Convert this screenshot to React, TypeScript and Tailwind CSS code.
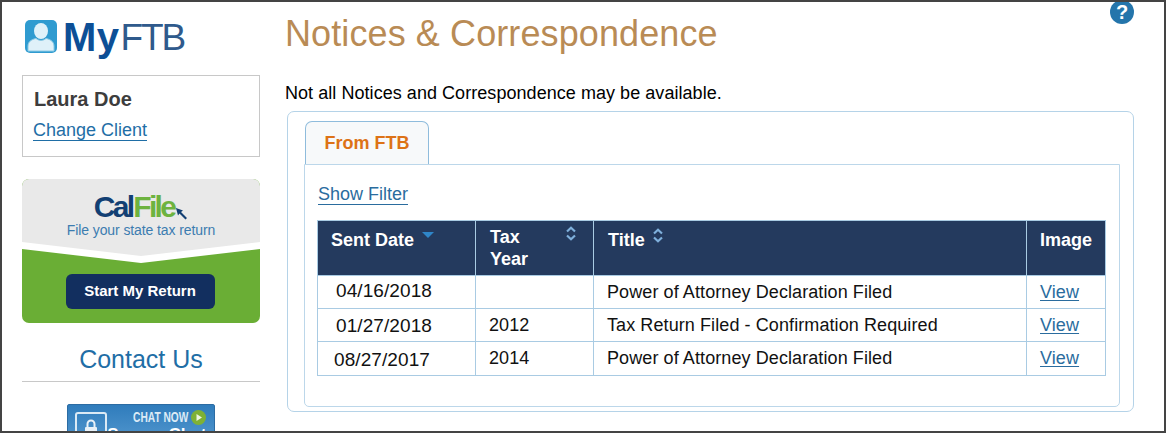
import React from "react";

type Row = { date: string; year: string; title: string; dateCls: string };

const rows: Row[] = [
  { date: "04/16/2018", year: "", title: "Power of Attorney Declaration Filed", dateCls: "pl-[18px] pb-[1px]" },
  { date: "01/27/2018", year: "2012", title: "Tax Return Filed - Confirmation Required", dateCls: "pl-[18px] pt-[2px]" },
  { date: "08/27/2017", year: "2014", title: "Power of Attorney Declaration Filed", dateCls: "pl-[16px] pt-[4px]" },
];

function SortIcon() {
  return (
    <svg width="12" height="15" viewBox="0 0 12 15" fill="none" stroke="#7fb0dc" strokeWidth="2.2">
      <path d="M2 5.5 L6 1.8 L10 5.5" />
      <path d="M2 9.5 L6 13.2 L10 9.5" />
    </svg>
  );
}

function Logo() {
  return (
    <div className="flex items-center h-[38px] pl-[3px] font-['Liberation_Sans',Arial,sans-serif]">
      <svg width="32" height="33" viewBox="0 0 32 33" className="mr-[6px] mt-[-2px]">
        <rect width="32" height="33" rx="5" fill="#2f9bd0" />
        <ellipse cx="16" cy="11" rx="7" ry="8" fill="#dff1f9" />
        <path d="M3 31 V26 C3 21 8 19 11 18.5 C14 21 18 21 21 18.5 C24 19 29 21 29 26 V31 Z" fill="#dff1f9" stroke="#8ccbe6" strokeWidth="1" />
      </svg>
      <span className="text-[40px] font-bold text-[#0d4f96] tracking-[0.4px] leading-none">My</span>
      <span className="text-[37px] text-[#2f5a8c] tracking-[-2px] leading-none ml-[1px]">FTB</span>
    </div>
  );
}

function CalFileBanner() {
  return (
    <div className="mt-[22px] w-[238px] h-[144px] rounded-[7px] overflow-hidden bg-[#6aae35] flex flex-col items-center">
      <div className="w-full h-[63px] bg-[#e9e9e9] flex flex-col items-center pt-[13px]">
        <div className="flex items-end h-[30px]">
          <span className="text-[30px] leading-[30px] font-bold tracking-[-2.7px] text-[#123f73]">Cal</span>
          <span className="text-[30px] leading-[30px] font-bold tracking-[-2.7px] text-[#6db33f] ml-[1px]">File</span>
          <svg width="13" height="13" viewBox="0 0 13 13" className="mb-[2px] ml-[1px]">
            <path d="M1 1 L8 3.5 L6 5 L12 11 L10.5 12.5 L4.5 6.5 L3 8.5 Z" fill="#123f73" />
          </svg>
        </div>
        <div className="text-[14px] leading-[15px] text-[#3c7cb0] tracking-[-0.1px] mt-[1px]">File your state tax return</div>
      </div>
      <svg width="238" height="21" viewBox="0 0 238 21" className="block shrink-0">
        <polygon points="0,0 238,0 238,7 119,21 0,7" fill="#ffffff" />
        <polygon points="0,0 238,0 119,14" fill="#e9e9e9" />
      </svg>
      <button className="mt-[11px] mr-[2px] w-[149px] h-[35px] rounded-[6px] bg-[#122f5f] text-white text-[15px] font-bold">
        Start My Return
      </button>
    </div>
  );
}

function ChatBanner() {
  return (
    <div className="mt-[22px] mx-auto w-[148px] h-[50px] rounded-t-[2px] border border-[#2c6ca3] bg-gradient-to-b from-[#2f7cbc] to-[#5b9fd3] flex">
      <div className="ml-[7px] mt-[7px] w-[32px] h-[40px] shrink-0 border-2 border-[#dbeaf5] rounded-[3px] flex justify-center pt-[5px]">
        <svg width="14" height="18" viewBox="0 0 14 18">
          <path d="M3.5 8 V5 a3.5 3.5 0 0 1 7 0 V8" fill="none" stroke="#e8f1f8" strokeWidth="2" />
          <rect x="1" y="8" width="12" height="9" rx="1" fill="#e8f1f8" />
        </svg>
      </div>
      <div className="ml-auto mr-[8px] flex flex-col items-end">
        <div className="flex items-center mt-[3px] gap-[3px] h-[18px]">
          <span className="text-[15px] font-bold whitespace-nowrap text-[#dcebf6] scale-x-[0.68] origin-right">CHAT NOW</span>
          <svg width="15" height="15" viewBox="0 0 15 15" className="shrink-0">
            <circle cx="7.5" cy="7.5" r="7.5" fill="#7fb135" />
            <path d="M5.5 4 L11 7.5 L5.5 11 Z" fill="#eef6e0" />
          </svg>
        </div>
        <span className="text-[17px] leading-[18px] font-bold whitespace-nowrap text-white">Secure Chat</span>
      </div>
    </div>
  );
}

export default function App() {
  return (
    <div className="relative w-[1166px] h-[433px] overflow-hidden bg-white border-2 border-[#444444] font-['Liberation_Sans',Arial,sans-serif] flex">
      {/* help icon */}
      <div className="absolute left-[1108px] top-[-2px] w-[24px] h-[24px] rounded-full bg-[#2475ab] text-white text-[20px] font-bold leading-[24px] text-center">
        ?
      </div>

      {/* Sidebar */}
      <aside className="w-[238px] ml-[20px] pt-[16px] shrink-0">
        <Logo />
        <div className="mt-[19px] h-[82px] border border-[#c8c8c8] pl-[10px] pt-[12px]">
          <div className="text-[20px] leading-[23px] font-bold text-[#3d3d3d] pl-[1px]">Laura Doe</div>
          <a className="block w-fit mt-[9px] text-[18px] leading-[20px] text-[#1f6ea6] border-b border-[#1f6ea6]">Change Client</a>
        </div>
        <CalFileBanner />
        <div className="mt-[20px] h-[39px] border-b border-[#c8c8c8] text-center text-[25px] leading-[32px] text-[#1f6ea6]">Contact Us</div>
        <ChatBanner />
      </aside>

      {/* Main */}
      <main className="ml-[25px] w-[849px] shrink-0">
        <h1 className="mt-[11px] text-[36px] leading-[42px] text-[#b98b55] tracking-[0.1px]">Notices &amp; Correspondence</h1>
        <p className="mt-[28px] text-[18px] leading-[20px] tracking-[0.05px] text-black">Not all Notices and Correspondence may be available.</p>
        <div className="mt-[8px] ml-[2px] w-[847px] h-[301px] rounded-[7px] border border-[#b5d3e8] pl-[16px] pt-[9px] pr-[13px]">
          <div className="ml-[1px] w-[124px] h-[43px] rounded-t-[7px] border border-b-0 border-[#8fbcdc] bg-[#f7f9fa] text-center text-[18px] font-bold leading-[42px] text-[#dd7216]">
            From FTB
          </div>
          <div className="h-[243px] rounded-b-[5px] border border-[#bcd7ea] pl-[12px] pt-[19px]">
            <a className="block w-fit ml-[1px] text-[18px] leading-[20px] text-[#2a6c9e] border-b border-[#2a6c9e]">Show Filter</a>
            <table className="mt-[15px] w-[788px] table-fixed border-collapse border border-[#a9cbe3]">
              <colgroup>
                <col className="w-[158px]" />
                <col className="w-[118px]" />
                <col className="w-[433px]" />
                <col className="w-[79px]" />
              </colgroup>
              <thead>
                <tr className="h-[55px] bg-[#243a5e] text-white text-[18px] font-bold text-left">
                  <th className="border border-[#a9cbe3] pl-[13px] pt-[8px] align-top">
                    <div className="flex items-start leading-[22px]">
                      <span>Sent Date</span>
                      <svg width="12" height="6" viewBox="0 0 12 6" className="ml-[8px] mt-[3px]">
                        <path d="M0 0 H12 L6 6 Z" fill="#2f86c9" />
                      </svg>
                    </div>
                  </th>
                  <th className="border border-[#a9cbe3] pl-[14px] align-top pt-[5px]">
                    <div className="flex items-start justify-between pr-[16px] leading-[22px]">
                      <span>Tax<br />Year</span>
                      <span><SortIcon /></span>
                    </div>
                  </th>
                  <th className="border border-[#a9cbe3] pl-[14px] pt-[8px] align-top">
                    <div className="flex items-start leading-[22px]">
                      <span>Title</span>
                      <span className="ml-[7px] mt-[-1px]"><SortIcon /></span>
                    </div>
                  </th>
                  <th className="border border-[#a9cbe3] pl-[13px] pt-[8px] align-top leading-[22px]">Image</th>
                </tr>
              </thead>
              <tbody>
                {rows.map((row) => (
                  <tr key={row.date} className="h-[33px] text-[18px] tracking-[0.09px] text-[#111111]">
                    <td className={"border border-[#a9cbe3] text-[19px] " + row.dateCls}>{row.date}</td>
                    <td className="border border-[#a9cbe3] pl-[13px]">{row.year}</td>
                    <td className="border border-[#a9cbe3] pl-[13px]">{row.title}</td>
                    <td className="border border-[#a9cbe3] pl-[13px]">
                      <a className="text-[18px] text-[#2a6c9e] underline underline-offset-2">View</a>
                    </td>
                  </tr>
                ))}
              </tbody>
            </table>
          </div>
        </div>
      </main>
    </div>
  );
}
